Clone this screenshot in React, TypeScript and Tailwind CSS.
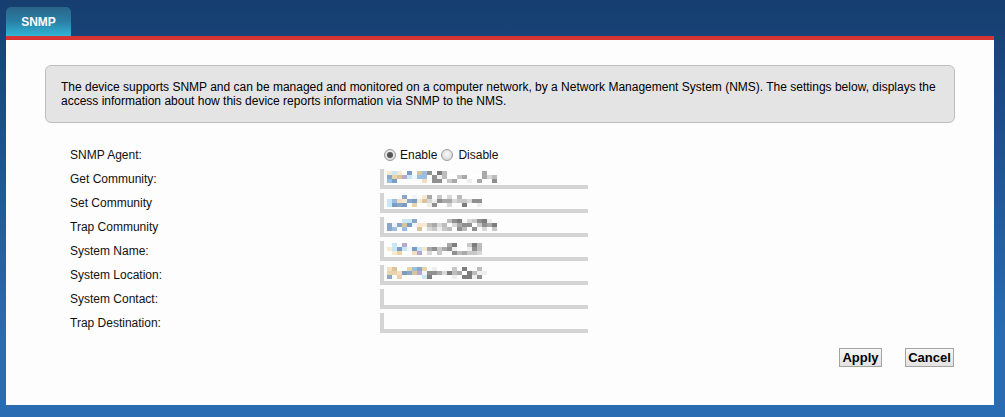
import React from "react";

const rows: { label: string; seed: number; len: number }[] = [
  { label: "Get Community:", seed: 3, len: 22 },
  { label: "Set Community", seed: 7, len: 20 },
  { label: "Trap Community", seed: 11, len: 22 },
  { label: "System Name:", seed: 17, len: 19 },
  { label: "System Location:", seed: 23, len: 20 },
  { label: "System Contact:", seed: 0, len: 0 },
  { label: "Trap Destination:", seed: 0, len: 0 },
];

const colorful = ["#9bbfe0", "#e9d3a8", "#f7e9cf", "#c9e6f5", "#7a9cc4", "#b8a8d0", "#d9c49b", "#eef6fb", "#8aa7c9", "#f3dfc0"];
const grays = ["#c8c8c8", "#a9a9a9", "#7d7d7d", "#d8d8d8", "#bcbcbc", "#909090", "#eeeeee", "#ffffff"];

function rand(seed: number) {
  let s = seed * 9301 + 49297;
  return () => {
    s = (s * 9301 + 49297) % 233280;
    return s / 233280;
  };
}

function Mosaic({ seed, len }: { seed: number; len: number }) {
  if (!len) return null;
  const r = rand(seed);
  const cells: React.ReactNode[] = [];
  for (let row = 0; row < 3; row++) {
    for (let c = 0; c < len; c++) {
      const colorPart = c < 8;
      const pal = colorPart ? colorful : grays;
      let col = pal[Math.floor(r() * pal.length)];
      if (row === 0 && r() < 0.55) col = "transparent";
      if (row === 2 && (colorPart || r() < 0.45)) col = colorPart && r() < 0.5 ? col : "transparent";
      cells.push(
        <div key={row + "-" + c} style={{ width: 5, height: 4, background: col }} />
      );
    }
  }
  return (
    <div
      className="absolute left-[3px] top-[2px] grid"
      style={{ gridTemplateColumns: `repeat(${len}, 5px)` }}
    >
      {cells}
    </div>
  );
}

function Field({ seed, len }: { seed: number; len: number }) {
  return (
    <div className="relative h-[20px] w-[208px] border-l-[4px] border-b-[4px] border-[#d4d4d4]">
      <Mosaic seed={seed} len={len} />
    </div>
  );
}

function Radio({ checked }: { checked?: boolean }) {
  return (
    <span className="inline-flex h-[12px] w-[12px] items-center justify-center rounded-full border border-[#9a9a9a] bg-[radial-gradient(circle_at_50%_40%,#fafafa,#cfcfcf)]">
      {checked && <span className="h-[6px] w-[6px] rounded-full bg-[#555]" />}
    </span>
  );
}

export default function App() {
  return (
    <div
      className="flex h-[417px] w-[1005px] flex-col bg-[linear-gradient(to_bottom,#163e6f_0%,#1d4f8b_30%,#2a6cb1_80%,#2a6cb1_100%)] pl-[6px] pr-[11px] pt-[7px]"
      style={{ fontFamily: '"Liberation Sans", Arial, sans-serif' }}
    >
      <div className="flex h-[29px]">
        <div className="flex w-[65px] items-center justify-center rounded-t-[5px] bg-[linear-gradient(to_bottom,#2a6489_0%,#2a7fa6_50%,#2fb6d6_100%)] text-[12px] font-bold text-white">
          SNMP
        </div>
      </div>
      <div className="h-[4px] bg-[#d63333]" />
      <div className="flex h-[365px] flex-col bg-[#fdfdfd]">
        <div className="ml-[39px] mt-[25px] h-[58px] w-[910px] rounded-[6px] border border-[#bdbdbd] bg-[#e4e4e4] px-[15px] pt-[14px] text-[12px] leading-[14px] text-black">
          <div className="whitespace-nowrap">
            The device supports SNMP and can be managed and monitored on a computer network, by a Network Management System (NMS). The settings below, displays the
          </div>
          <div className="whitespace-nowrap">
            access information about how this device reports information via SNMP to the NMS.
          </div>
        </div>

        <div className="ml-[64px] mt-[20px] flex flex-col text-[12px] text-[#111]">
          <div className="flex h-[24px] items-center">
            <div className="w-[310px]">SNMP Agent:</div>
            <div className="ml-[4px] flex items-center">
              <Radio checked />
              <span className="ml-[4px]">Enable</span>
              <span className="ml-[4px] flex items-center">
                <Radio />
              </span>
              <span className="ml-[5px]">Disable</span>
            </div>
          </div>
          {rows.map((r) => (
            <div key={r.label} className="flex h-[24px] items-center">
              <div className="w-[310px]">{r.label}</div>
              <Field seed={r.seed} len={r.len} />
            </div>
          ))}
        </div>

        <div className="mr-[40px] mt-[13px] flex justify-end gap-[23px]">
          <button className="h-[19px] w-[43px] border border-[#a3a3a3] bg-[linear-gradient(to_bottom,#f6f6f6,#e2e2e2)] text-[13px] font-bold leading-none text-black">
            Apply
          </button>
          <button className="h-[19px] w-[49px] border border-[#a3a3a3] bg-[linear-gradient(to_bottom,#f6f6f6,#e2e2e2)] text-[13px] font-bold leading-none text-black">
            Cancel
          </button>
        </div>
      </div>
    </div>
  );
}
